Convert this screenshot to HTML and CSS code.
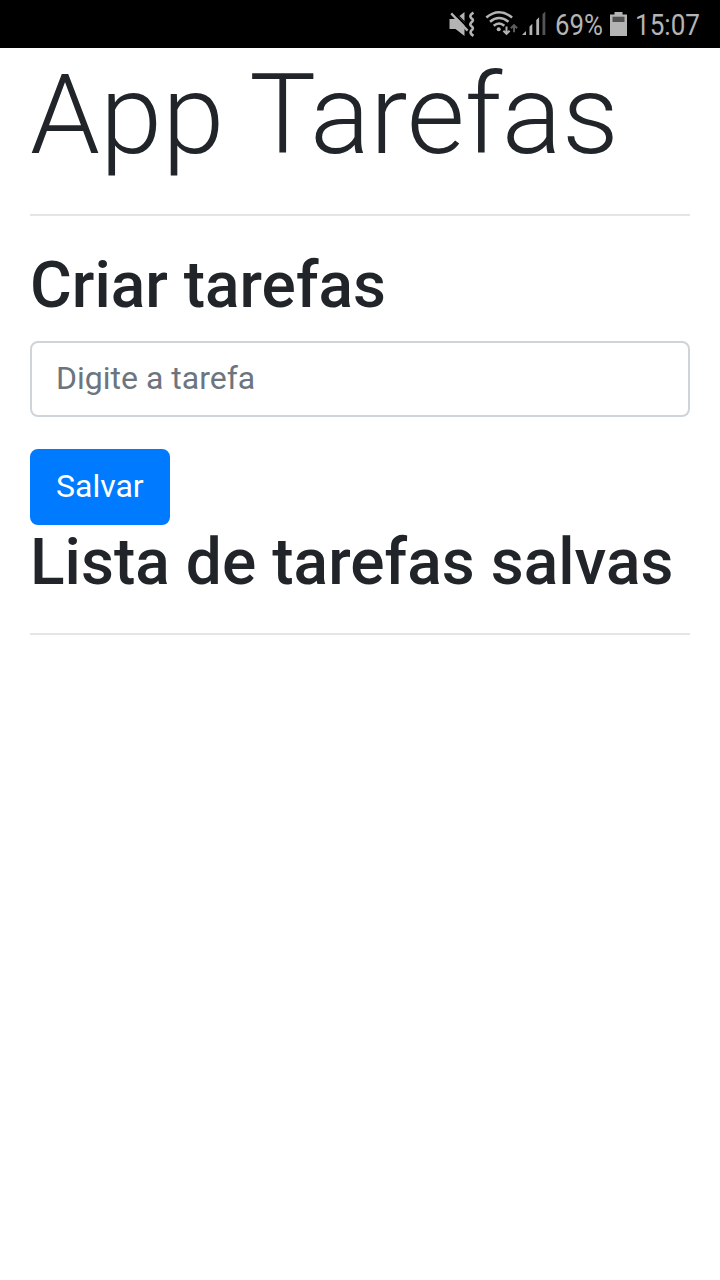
FILE: index.html
```html
<!DOCTYPE html>
<html lang="pt-BR">
<head>
<meta charset="utf-8">
<title>App Tarefas</title>
<link rel="stylesheet" href="styles.css">
</head>
<body>
<header class="status">
  <svg class="status-icons" width="100" height="48" viewBox="446 0 100 48">
    <path fill="#b4b4b4" d="M449.5 19h6l3-2.600 6 6.200V36l-9-7h-6zM459.500 16l5-4v9z"/>
    <path stroke="#000" stroke-width="2" d="M453 12.500l16 16"/>
    <path stroke="#b4b4b4" stroke-width="2.300" d="M451.200 13.400l16.400 17.200"/>
    <path fill="none" stroke="#b4b4b4" stroke-width="2.600" stroke-linejoin="round" d="M473.500 12.600q-5 3-2.200 5.600q3.400 1.700-.3 4.600q-1.700 2 .5 3.500q3 2-.5 4.500q-1.500 2.500 2.500 5"/>
    <path fill="none" stroke="#b4b4b4" stroke-width="2.500" d="M486.300 17.500q12.700-10.500 25.800 0M490 21.800q9-7.600 18.500 0M493.700 25.800q5.400-4.600 10.600 0"/>
    <circle cx="498.700" cy="29.300" r="2" fill="#b4b4b4"/>
    <path fill="none" stroke="#b4b4b4" stroke-width="2" d="M506.500 26.500v7M503.400 30.700l3.100 3.200 3.100-3.200"/>
    <path fill="none" stroke="#5c5c5c" stroke-width="2" d="M514 32.300v-7M510.900 28.300l3.100-3.200 3.100 3.200"/>
    <path fill="#b4b4b4" d="M522 35l4-4v4zM529.500 26.500l2.800-2.800V35h-2.800zM536.300 20l2.800-2.800V35h-2.800z"/>
    <path fill="#555" d="M542.500 14.200l2.800-2.800V35h-2.800z"/>
  </svg>
  <span class="percent">69%</span>
  <svg class="battery" width="17" height="24" viewBox="0 0 17 24"><path fill="#b4b4b4" d="M4.500 0h8v2.500H17V24H0V2.500h4.500z"/><path fill="#505050" d="M2.500 4.700h12V10h-12z"/></svg>
  <span class="clock">15:07</span>
</header>
<main class="container">
  <h1 class="display">App Tarefas</h1>
  <hr class="rule">
  <h2 class="heading">Criar tarefas</h2>
  <form>
    <input class="field" type="text" placeholder="Digite a tarefa">
    <button class="button" type="button">Salvar</button>
  </form>
  <h2 class="heading saved">Lista de tarefas salvas</h2>
  <hr class="rule">
</main>
</body>
</html>
```

FILE: styles.css
```css
* { box-sizing: border-box; }
body { margin: 0; background: #fff; color: #212529; font-family: Roboto, sans-serif; }
.status { height: 48px; background: #000; color: #b4b4b4; display: flex; align-items: center; padding-left: 446px; }
.percent, .clock { height: 48px; padding-top: 1px; font-size: 30px; line-height: 48px; transform: scaleX(.86); transform-origin: left; }
.percent { width: 55px; margin-left: 9px; }
.clock { margin-left: 8px; transform: scaleX(.87); }
.battery { flex: none; }
.container { padding: 0 30px; }
.display { margin: 0 0 16px; font-size: 112px; line-height: 134px; font-weight: 300; white-space: nowrap; }
.rule { margin: 32px 0; border: 0; border-top: 2px solid #e5e5e5; }
.heading { margin: 0 0 16px; font-size: 64px; line-height: 76px; font-weight: 500; white-space: nowrap; }
.saved { letter-spacing: .05px; }
.field { display: block; width: 100%; height: 76px; margin: 16.5px 0 32px; padding: 11px 24px 13px; border: 2px solid #ced4da; border-radius: 8px; font: 32px/48px Roboto, sans-serif; }
.field::placeholder { color: #6c757d; opacity: 1; }
.button { display: block; height: 76px; padding: 11px 24px 13px; border: 2px solid #007bff; border-radius: 8px; background: #007bff; color: #fff; font: 32px/48px Roboto, sans-serif; }
```
